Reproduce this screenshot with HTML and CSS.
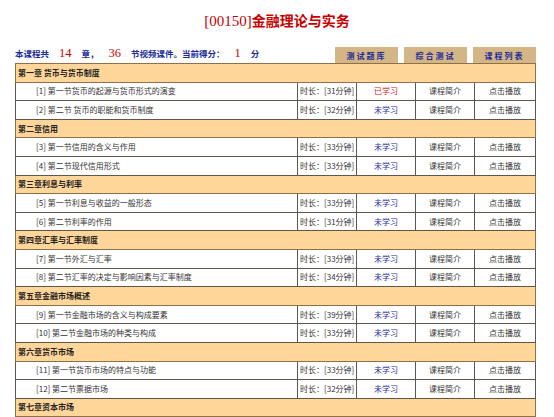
FILE: index.html
```html
<!DOCTYPE html>
<html lang="zh">
<head>
<meta charset="utf-8">
<title>[00150]金融理论与实务</title>
<link rel="stylesheet" href="styles.css">
</head>
<body>
<div class="page">
  <h1 class="title"><span class="code">[00150]</span>金融理论与实务</h1>
  <div class="info">
    <div class="summary">本课程共<span class="num">14</span>章，<span class="num">36</span>节视频课件。当前得分：<span class="num">1</span>分</div>
    <div class="buttons">
      <a class="btn">测试题库</a>
      <a class="btn">综合测试</a>
      <a class="btn">课程列表</a>
    </div>
  </div>
  <table class="course">
    <colgroup>
      <col class="c-name"><col class="c-dur"><col class="c-stat"><col class="c-intro"><col class="c-play">
    </colgroup>
    <tbody>
      <tr class="chapter"><td colspan="5">第一章 货币与货币制度</td></tr>
      <tr><td class="name">[1] 第一节货币的起源与货币形式的演变</td><td class="dur">时长：[31分钟]</td><td class="stat done">已学习</td><td class="ctr">课程简介</td><td class="ctr">点击播放</td></tr>
      <tr><td class="name">[2] 第二节 货币的职能和货币制度</td><td class="dur">时长：[32分钟]</td><td class="stat">未学习</td><td class="ctr">课程简介</td><td class="ctr">点击播放</td></tr>
      <tr class="chapter"><td colspan="5">第二章信用</td></tr>
      <tr><td class="name">[3] 第一节信用的含义与作用</td><td class="dur">时长：[33分钟]</td><td class="stat">未学习</td><td class="ctr">课程简介</td><td class="ctr">点击播放</td></tr>
      <tr><td class="name">[4] 第二节现代信用形式</td><td class="dur">时长：[33分钟]</td><td class="stat">未学习</td><td class="ctr">课程简介</td><td class="ctr">点击播放</td></tr>
      <tr class="chapter"><td colspan="5">第三章利息与利率</td></tr>
      <tr><td class="name">[5] 第一节利息与收益的一般形态</td><td class="dur">时长：[33分钟]</td><td class="stat">未学习</td><td class="ctr">课程简介</td><td class="ctr">点击播放</td></tr>
      <tr><td class="name">[6] 第二节利率的作用</td><td class="dur">时长：[31分钟]</td><td class="stat">未学习</td><td class="ctr">课程简介</td><td class="ctr">点击播放</td></tr>
      <tr class="chapter"><td colspan="5">第四章汇率与汇率制度</td></tr>
      <tr><td class="name">[7] 第一节外汇与汇率</td><td class="dur">时长：[33分钟]</td><td class="stat">未学习</td><td class="ctr">课程简介</td><td class="ctr">点击播放</td></tr>
      <tr><td class="name">[8] 第二节汇率的决定与影响因素与汇率制度</td><td class="dur">时长：[34分钟]</td><td class="stat">未学习</td><td class="ctr">课程简介</td><td class="ctr">点击播放</td></tr>
      <tr class="chapter"><td colspan="5">第五章金融市场概述</td></tr>
      <tr><td class="name">[9] 第一节金融市场的含义与构成要素</td><td class="dur">时长：[39分钟]</td><td class="stat">未学习</td><td class="ctr">课程简介</td><td class="ctr">点击播放</td></tr>
      <tr><td class="name">[10] 第二节金融市场的种类与构成</td><td class="dur">时长：[33分钟]</td><td class="stat">未学习</td><td class="ctr">课程简介</td><td class="ctr">点击播放</td></tr>
      <tr class="chapter"><td colspan="5">第六章货币市场</td></tr>
      <tr><td class="name">[11] 第一节货币市场的特点与功能</td><td class="dur">时长：[33分钟]</td><td class="stat">未学习</td><td class="ctr">课程简介</td><td class="ctr">点击播放</td></tr>
      <tr><td class="name">[12] 第二节票据市场</td><td class="dur">时长：[32分钟]</td><td class="stat">未学习</td><td class="ctr">课程简介</td><td class="ctr">点击播放</td></tr>
      <tr class="chapter"><td colspan="5">第七章资本市场</td></tr>
    </tbody>
  </table>
</div>
</body>
</html>
```
FILE: styles.css
```css
html, body {
  margin: 0;
  padding: 0;
  background: #ffffff;
}
body {
  font-family: "Noto Sans CJK SC", "Liberation Sans", sans-serif;
  overflow: hidden;
}
.page {
  width: 554px;
  height: 417px;
  overflow: hidden;
}
.title {
  margin: 0;
  height: 47px;
  padding-top: 11px;
  box-sizing: border-box;
  text-align: center;
  font-size: 14px;
  line-height: 18px;
  font-weight: bold;
  color: #c80000;
  font-family: "Noto Sans CJK SC", sans-serif;
}
.title .code {
  font-family: "Liberation Serif", serif;
  font-weight: normal;
  font-size: 15px;
}
.info {
  display: flex;
  justify-content: space-between;
  align-items: flex-start;
  height: 16px;
  padding: 0 18px 0 15px;
}
.summary {
  font-size: 8.5px;
  line-height: 12px;
  font-weight: bold;
  color: #1a2a9a;
  white-space: pre;
}
.summary .num {
  font-family: "Liberation Serif", serif;
  font-weight: normal;
  font-size: 12.5px;
  color: #c80000;
  padding: 0 10px;
}
.buttons {
  display: flex;
  gap: 6px;
}
.btn {
  display: flex;
  align-items: center;
  justify-content: center;
  width: 63px;
  height: 16px;
  background: #d4b585;
  color: #1a2a9a;
  font-size: 8px;
  font-weight: bold;
  letter-spacing: 2px;
}
.course {
  margin-left: 15px;
  width: 520px;
  border-collapse: collapse;
  table-layout: fixed;
  border: 1px solid #a6824e;
  font-size: 8px;
  color: #333333;
}
.c-name { width: 282px; }
.c-dur { width: 59px; }
.c-stat { width: 59px; }
.c-intro { width: 59px; }
.c-play { width: 61px; }
.course tr {
  height: 18.6px;
}
.course td {
  border: 1px solid #5f564c;
  padding: 0;
  line-height: 10px;
  white-space: nowrap;
  overflow: hidden;
}
.course tr.chapter td {
  background: #ffd699;
  font-weight: bold;
  color: #222222;
  padding-left: 2px;
  border-color: #8f7048;
}
.course td.name {
  padding-left: 20px;
}
.course td.dur {
  padding-left: 2px;
}
.course td.stat {
  text-align: center;
  color: #2a2aa0;
}
.course td.stat.done {
  color: #cc2222;
}
.course td.ctr {
  text-align: center;
}
```
